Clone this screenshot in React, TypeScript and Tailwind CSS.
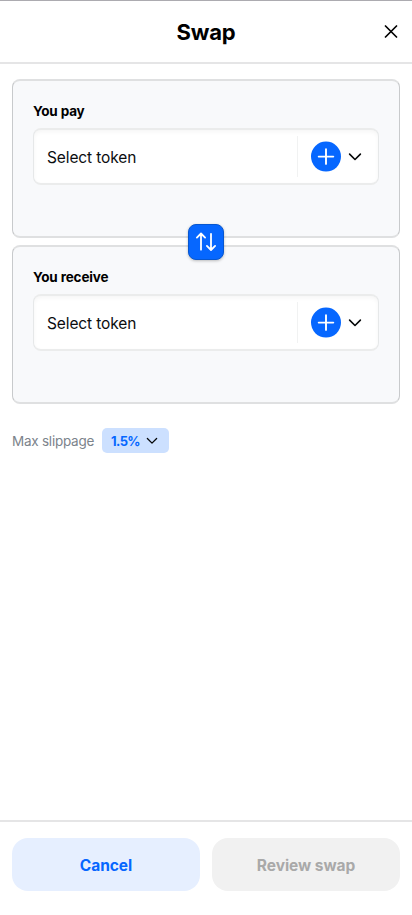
import React from "react";

function Chevron({ className, width = 1.6 }: { className: string; width?: number }) {
  return (
    <svg className={className} viewBox="0 0 14 14" fill="none" stroke="#050708" strokeWidth={width} strokeLinecap="round" strokeLinejoin="round">
      <path d="M1.6 4.1 7 9.5l5.4-5.4" />
    </svg>
  );
}

function TokenCard({ label }: { label: string }) {
  return (
    <section className="h-[159px] rounded-[8px] border-x border-y-2 border-x-[#c8cacc] border-y-[#dfe0e1] bg-[#f8f9fb] px-5 pt-5">
      <h2 className="h-[27px] text-[13.5px] leading-[21px] font-bold tracking-[-0.15px] text-black">{label}</h2>
      <button className="flex h-[57px] w-full items-center rounded-[8px] border-x border-y-2 border-x-[#e6e8e9] border-y-[#ebecec] bg-white pl-[13px] text-left shadow-[inset_0_2px_4px_rgba(0,0,0,0.04)]">
        <span className="flex-1 pt-[3px] text-[15.5px] leading-6 font-normal tracking-[-0.12px] text-[#0b0d0f]">Select token</span>
        <span className="flex h-[41px] w-[81px] items-center border-l border-[#f1f2f2] pl-[13px]">
          <svg className="size-[30px] shrink-0 overflow-visible" viewBox="0 0 30 30" fill="none">
            <circle cx="15" cy="14.6" r="15" fill="#0667ff" />
            <path d="M15 7.3v14.6M7.7 14.6h14.6" stroke="white" strokeWidth="1.9" strokeLinecap="round" />
          </svg>
          <Chevron className="ml-[7px] size-[14px] shrink-0" />
        </span>
      </button>
    </section>
  );
}

export default function App() {
  return (
    <div className="flex h-[915px] w-full flex-col border-t border-[#acabb0] bg-white font-['Inter','Liberation_Sans',sans-serif]">
      <header className="grid h-[63px] shrink-0 grid-cols-[1fr_auto_1fr] items-center border-b-2 border-[#e5e5e6] px-[14px]">
        <h1 className="col-start-2 text-[22px] leading-8 font-bold tracking-[-0.2px] text-black">Swap</h1>
        <button aria-label="Close" className="justify-self-end">
          <svg className="size-[14px]" viewBox="0 0 14 14" fill="none" stroke="black" strokeWidth="1.7" strokeLinecap="round">
            <path d="m1.5 1 11 11m0-11-11 11" />
          </svg>
        </button>
      </header>

      <main className="flex-1 px-3 pt-[15px]">
        <div className="relative flex flex-col gap-[7px]">
          <TokenCard label="You pay" />
          <TokenCard label="You receive" />
          <button aria-label="Switch tokens" className="absolute top-[144.5px] left-[176px] flex size-9 items-center justify-center rounded-[8px] border border-[#0757d0] bg-[#0667ff] shadow-[0_1px_3px_rgba(0,0,0,0.25)]">
            <svg className="size-[22px] shrink-0" viewBox="0 0 22 22" fill="none" stroke="white" strokeWidth="1.8" strokeLinecap="round" strokeLinejoin="round">
              <path d="M6 18.7V2.8M1.9 6.6 6 2.5l4.1 4.1M16 2.8v15.9M11.9 14.9 16 19l4.1-4.1" />
            </svg>
          </button>
        </div>
        <div className="mt-6 flex items-center gap-2">
          <span className="w-[82px] pt-0.5 text-[13.5px] leading-[21px] tracking-[-0.24px] whitespace-nowrap text-[#7c838b]">Max slippage</span>
          <button className="flex h-[25px] w-[67px] items-center justify-between rounded-[5px] bg-[#cce0ff] pr-[11px] pl-[9px]">
            <span className="pt-px text-[13px] leading-5 font-bold tracking-[-0.6px] text-[#0667ff]">1.5%</span>
            <Chevron className="size-3" width={1.5} />
          </button>
        </div>
      </main>

      <footer className="flex h-[95px] shrink-0 gap-3 border-t-2 border-[#e5e5e6] px-3 pt-4">
        <button className="h-[53px] flex-1 rounded-[16px] bg-[#e6efff] pt-[3px] text-[15.5px] font-bold tracking-[-0.05px] text-[#0667ff]">Cancel</button>
        <button disabled className="h-[53px] flex-1 rounded-[16px] bg-[#f1f1f1] pt-[3px] text-[15.5px] font-bold tracking-[-0.05px] text-[#a9a9a9]">Review swap</button>
      </footer>
    </div>
  );
}
